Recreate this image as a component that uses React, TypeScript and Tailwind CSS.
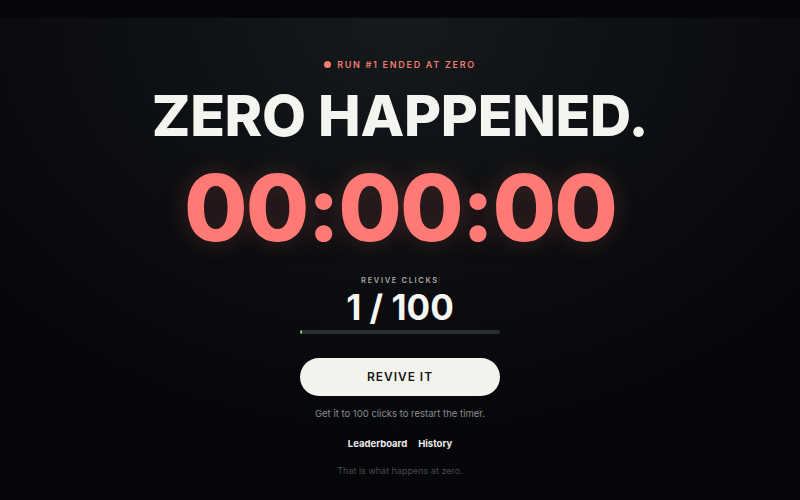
import React from 'react';

const App: React.FC = () => {
  const clicks = 1;
  const goal = 100;

  return (
    <div
      className="w-[800px] h-[500px] overflow-hidden flex flex-col bg-[#05070a] text-[#f3f3ef]"
      style={{ fontFamily: 'Inter, "Noto Sans", sans-serif' }}
    >
      <div className="h-[18px] shrink-0 bg-[#05070a]" />
      <main className="flex-1 flex flex-col items-center bg-[radial-gradient(ellipse_70%_90%_at_50%_0%,#151a1b_0%,#0c0e11_55%,#05060a_100%)]">
        <div className="mt-[40px] flex items-center gap-[6px] text-[9px] font-semibold tracking-[0.19em] text-[#f07a72]">
          <span className="w-[7px] h-[7px] rounded-full bg-[#ff7b73]" />
          RUN #1 ENDED AT ZERO
        </div>

        <h1 className="mt-[12px] text-[57px] leading-[64px] font-extrabold tracking-[-0.005em] text-[#f4f4f0]">
          ZERO HAPPENED.
        </h1>

        <div className="mt-[10px] text-[92px] leading-[100px] font-extrabold tracking-[-0.02em] text-[#ff7a75] [text-shadow:0_0_24px_rgba(255,110,100,0.22)]">
          00:00:00
        </div>

        <div className="mt-[17px] text-[7.5px] font-semibold tracking-[0.22em] text-[#a9a9a6]">REVIVE CLICKS</div>
        <div className="mt-[2px] text-[35px] leading-[38px] font-bold text-[#f6f6f2]">
          {clicks} / {goal}
        </div>

        <div className="mt-[4px] w-[200px] h-[4px] rounded-full bg-[#2a2d30] overflow-hidden">
          <div className="h-full rounded-full bg-[#8fd48a]" style={{ width: `${(clicks / goal) * 100}%` }} />
        </div>

        <button className="mt-[24px] w-[200px] h-[38px] rounded-full bg-[#f3f3ee] text-[#161616] text-[12px] font-semibold tracking-[0.08em]">
          REVIVE IT
        </button>

        <p className="mt-[11px] text-[9.5px] text-[#8d8d8b]">Get it to 100 clicks to restart the timer.</p>

        <nav className="mt-[16px] flex gap-[11px] text-[9.5px] font-bold text-[#ecece8]">
          <a>Leaderboard</a>
          <a>History</a>
        </nav>

        <p className="mt-[13px] text-[9px] text-[#4a4a48]">That is what happens at zero.</p>
      </main>
    </div>
  );
};

export default App;
